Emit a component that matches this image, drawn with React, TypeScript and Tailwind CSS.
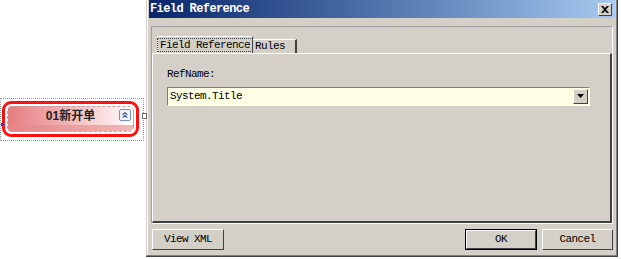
import { ChevronsUp } from "lucide-react";

const MONO = { fontFamily: '"Liberation Mono", "Noto Sans CJK SC", monospace' };

function Btn({ label, w, def }: { label: string; w: string; def?: boolean }) {
  return (
    <div className={`${w} h-[21px] ${def ? "border border-black" : ""}`}>
      <div className="flex h-full items-center justify-center border-t border-l border-t-white border-l-white border-r border-b border-r-[#404040] border-b-[#404040] bg-[#d4d0c8] text-[11px] tracking-[-0.6px] text-black">
        {label}
      </div>
    </div>
  );
}

function Node() {
  return (
    <div className="relative mt-[98px] h-[43px] w-[144px] border border-dotted border-[#9a9a9a]">
      <div className="absolute left-0 top-[24px] h-[3px] w-[2px] bg-[#2030ff]" />
      <div className="ml-[1px] mt-[2px] h-[36px] w-[137px] rounded-[9px] border-[3px] border-[#ff1010] p-[2px]">
        <div className="relative flex h-full items-start justify-center rounded-[5px] border border-dashed border-[#c8a0a0] bg-gradient-to-r from-[#e57c80] via-[#f1b8ba] to-[#ffffff]">
          <span
            className="mt-[2px] text-[12px] font-bold leading-[14px] text-[#222]"
            style={{ fontFamily: '"Liberation Sans", "Noto Sans CJK SC", sans-serif' }}
          >
            01新开单
          </span>
          <div className="absolute bottom-0 left-0 right-0 h-[6px] rounded-b-[4px] bg-[#e48a8d] opacity-60" />
          <div className="absolute right-[2px] top-[2px] flex h-[12px] w-[12px] items-center justify-center rounded-[2px] border border-[#7890c0] bg-[#eef2fb]">
            <ChevronsUp size={10} strokeWidth={2.5} className="text-[#30508a]" />
          </div>
        </div>
      </div>
      <div className="absolute right-[-4px] top-[14px] h-[6px] w-[5px] border border-[#666] bg-white" />
    </div>
  );
}

export default function App() {
  return (
    <div className="flex h-[259px] w-[621px] overflow-hidden bg-white" style={MONO}>
      <div className="w-[146px] shrink-0">
        <Node />
      </div>

      {/* dialog */}
      <div className="h-[257px] w-[472px] border-r border-b border-r-[#404040] border-b-[#404040]">
        <div className="flex h-full flex-col border-l border-l-[#d4d0c8] border-r border-b border-r-[#808080] border-b-[#808080]">
          <div className="flex h-full flex-col border-l border-l-white bg-[#d4d0c8] pl-[1px] pr-[1px]">
            <div className="flex h-[18px] items-center justify-between bg-gradient-to-r from-[#0a246a] to-[#a6caf0] pl-[1px] pr-[3px]">
              <span className="text-[12px] font-bold tracking-[-0.6px] text-white">Field Reference</span>
              <div className="flex h-[13px] w-[14px] items-center justify-center border-t border-l border-t-white border-l-white border-r border-b border-r-[#404040] border-b-[#404040] bg-[#d4d0c8]">
                <svg width="8" height="7" viewBox="0 0 8 7">
                  <path d="M0 0h2l2 2 2-2h2L5 3.5 8 7H6L4 5 2 7H0l3-3.5z" fill="#000" />
                </svg>
              </div>
            </div>

            {/* tab control */}
            <div className="mx-[2px] mt-[8px] flex h-[198px] flex-col border-t border-l border-t-[#a0a0a0] border-l-[#a0a0a0] border-r border-b border-r-white border-b-white">
              <div className="flex h-[26px] items-end pl-[5px]">
                <div className="flex h-[17px] w-[96px] items-center justify-center whitespace-nowrap border-t border-l border-t-white border-l-white border-r border-r-[#404040] text-[11px] tracking-[-0.6px] text-black">
                  <span className="border border-dotted border-[#444] px-[2px] leading-[12px]">Field Reference</span>
                </div>
                <div className="flex h-[14px] w-[44px] items-center whitespace-nowrap border-t border-t-white border-r-2 border-r-[#404040] pl-[2px] text-[11px] tracking-[-0.6px] text-black">
                  Rules
                </div>
              </div>
              <div className="flex flex-1 flex-col border-t border-l border-t-white border-l-white border-r-2 border-b-2 border-r-[#404040] border-b-[#404040] pl-[14px] pr-[20px]">
                <div className="mt-[12px] text-[11px] tracking-[-0.6px] text-black">RefName:</div>
                <div className="mt-[4px] flex h-[19px] items-center border-t border-l border-t-[#808080] border-l-[#808080] border-r border-b border-r-white border-b-white bg-[#ffffe6]">
                  <span className="flex-1 pl-[2px] text-[11px] tracking-[-0.6px] text-black">System.Title</span>
                  <div className="mr-[1px] flex h-[15px] w-[15px] items-center justify-center border-t border-l border-t-white border-l-white border-r border-b border-r-[#404040] border-b-[#404040] bg-[#d4d0c8]">
                    <svg width="7" height="4" viewBox="0 0 7 4">
                      <path d="M0 0h7L3.5 4z" fill="#000" />
                    </svg>
                  </div>
                </div>
              </div>
            </div>

            {/* buttons */}
            <div className="mt-[5px] flex items-start pl-[3px] pr-[2px]">
              <Btn label="View XML" w="w-[72px]" />
              <div className="flex-1" />
              <Btn label="OK" w="w-[72px]" def />
              <div className="w-[5px]" />
              <Btn label="Cancel" w="w-[71px]" />
            </div>
          </div>
        </div>
      </div>
    </div>
  );
}
